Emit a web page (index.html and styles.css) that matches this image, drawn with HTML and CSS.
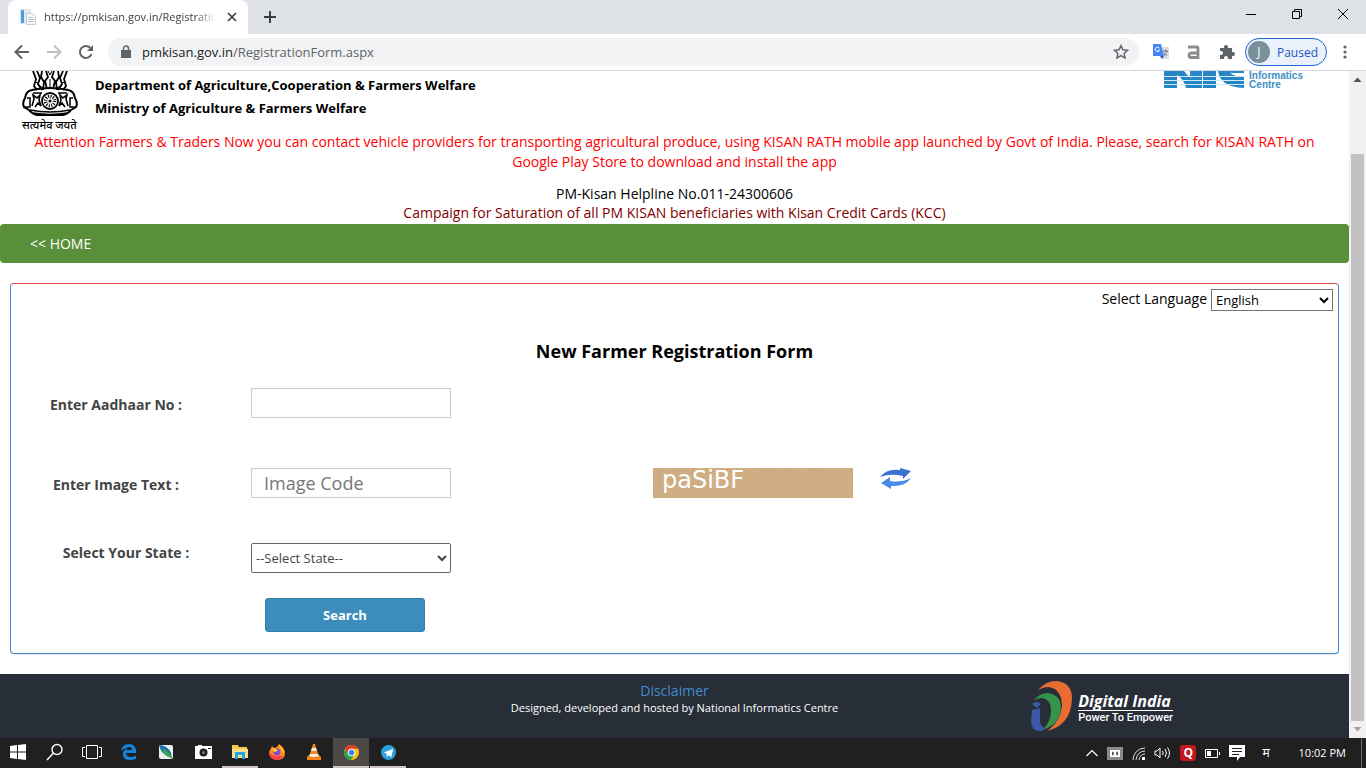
FILE: index.html
```html
<!doctype html>
<html lang="en">
<head>
	<meta charset="UTF-8">
	<title>New Farmer Registration Form</title>
	<link rel="stylesheet" href="styles.css">
</head>
<body>
	<div class="tabs">
		<div class="tab">
			<svg width="16" height="16" viewBox="0 0 16 16"><path fill="#e3e8ee" d="M0 0h11v15H0z"/><path fill="#4a9fd8" d="M1 1h3v13H1z"/><path fill="#f7f9fb" stroke="#c5cdd6" d="M6.500 4.500h6l3 3v8h-9z"/><path stroke="#b5bfcb" d="M8 8.500h5M8 10.500h6M8 12.500h6"/></svg>
			<span class="tab-title">https://pmkisan.gov.in/RegistrationForm.aspx</span>
			<button class="icon" aria-label="Close tab"><svg width="16" height="16" viewBox="0 0 16 16"><path d="M4 4l8 8M12 4l-8 8" stroke="#3c4043" stroke-width="1.700"/></svg></button>
		</div>
		<button class="icon new-tab" aria-label="New tab"><svg width="16" height="16" viewBox="0 0 16 16"><path d="M8 2v12M2 8h12" stroke="#3c4043" stroke-width="2"/></svg></button>
		<div class="win-buttons">
			<button class="icon" aria-label="Minimize"><svg width="12" height="12" viewBox="0 0 12 12"><path d="M1 6.500h10" stroke="#000"/></svg></button>
			<button class="icon" aria-label="Restore"><svg width="12" height="12" viewBox="0 0 12 12"><path d="M1.500 3.500h7v7h-7zM3.500 3V1.500h7v7H9" stroke="#000" fill="none"/></svg></button>
			<button class="icon" aria-label="Close"><svg width="12" height="12" viewBox="0 0 12 12"><path d="M1 1l10 10M11 1L1 11" stroke="#000"/></svg></button>
		</div>
	</div>

	<div class="toolbar">
		<button class="icon" aria-label="Back"><svg width="16" height="16" viewBox="0 0 16 16"><path d="M15 8H2M8 1.500L1.500 8 8 14.500" stroke="#5f6368" stroke-width="2" fill="none"/></svg></button>
		<button class="icon" aria-label="Forward"><svg width="16" height="16" viewBox="0 0 16 16"><path d="M1 8h13M8 1.500L14.500 8 8 14.500" stroke="#bdc1c6" stroke-width="2" fill="none"/></svg></button>
		<button class="icon" aria-label="Reload"><svg width="16" height="16" viewBox="0 0 16 16"><path d="M13.500 10.200A6 6 0 1 1 12.400 4" stroke="#5f6368" stroke-width="2" fill="none"/><path d="M15 1v6H9z" fill="#5f6368"/></svg></button>
		<div class="address">
			<svg width="10" height="14" viewBox="0 0 10 14"><path d="M0 5h10v8H0z" fill="#5f6368"/><path d="M2.500 5V3.500a2.500 2.500 0 0 1 5 0V5" stroke="#5f6368" stroke-width="1.500" fill="none"/></svg>
			<span class="url">pmkisan.gov.in<span class="path">/RegistrationForm.aspx</span></span>
			<svg width="16" height="16" viewBox="0 0 16 16"><path d="M8 1.500l1.900 4.300 4.700.5-3.500 3.100 1 4.600L8 11.600 3.900 14l1-4.600L1.400 6.300l4.700-.5z" stroke="#5f6368" stroke-width="1.400" fill="none"/></svg>
		</div>
		<div class="extensions">
			<svg width="16" height="16" viewBox="0 0 16 16"><path fill="#dadce0" d="M6 3h10v12H9z"/><path fill="#4285f4" d="M0 0h8l3 12H0z"/><path d="M6.300 4.200a2.200 2.200 0 1 0 .2 2H4.700" stroke="#fff" fill="none"/><path fill="#2a56c6" d="M7 12h4l-2 3z"/><path d="M10 7h5M12.500 6v1.500M14 7c0 2-2 4-3 4.500M11 8.500c1 2 2 2.500 3 3" stroke="#6b737b" fill="none"/></svg>
			<svg width="14" height="14" viewBox="0 0 14 14"><path d="M1 2h8.500q1.500 0 1.500 1.500V12.500H4Q2 12.500 2 10.500T4 8h7" stroke="#8a8a8a" stroke-width="2.800" fill="none"/></svg>
			<svg width="16" height="16" viewBox="0 0 16 16"><path fill="#5f6368" d="M1 4h4V3a2 2 0 0 1 4 0v1h4v4h1a2 2 0 0 1 0 4h-1v3H9v-1a2 2 0 0 0-4 0v1H1v-4h1a2 2 0 0 0 0-4H1z"/></svg>
		</div>
		<button class="profile"><span class="avatar">J</span>Paused</button>
		<button class="icon menu" aria-label="Menu"><svg width="4" height="16" viewBox="0 0 4 16"><g fill="#5f6368"><circle cx="2" cy="3" r="1.600"/><circle cx="2" cy="8" r="1.600"/><circle cx="2" cy="13" r="1.600"/></g></svg></button>
	</div>

	<div class="view">
		<div class="page">
			<header class="header">
				<div class="emblem">
					<svg width="56" height="46" viewBox="0 0 56 46">
						<g fill="none" stroke="#000">
							<path d="M11 0l3 8-2 7 3 4M15 0l3 7-2 6 4 6M20 0l-1 6 3 5-1 8M24 0l2 6-3 4 2 8M32 0l-2 6 3 4-2 8M36 0l1 6-3 5 1 8M41 0l-3 7 2 6-4 6M45 0l-3 8 2 7-3 4" stroke-width="1.800"/>
							<path d="M26 0l2 4 2-4M28 8v8M18 15l3 2M38 15l-3 2M13 11l3 1M43 11l-3 1"/>
							<path d="M10 19q-6 1-7 8-3 5-1 9l5 3q3 4 8 5h26q5-1 8-5l5-3q2-4-1-9-1-7-7-8-18-4-36 0z" stroke-width="2"/>
							<path d="M5 27h3v9H3M51 27h-3v9h5M8 39q20 4 40 0M11 42q17 3 34 0" stroke-width="1.500"/>
							<path d="M10 35l2-7-1-4 4 3 3-3-1 5 2 6-3-3-3 4M46 35l-2-7 1-4-4 3-3-3 1 5-2 6 3-3 3 4M11 22h9M36 22h9" stroke-width="1.600"/>
							<circle cx="28" cy="30" r="8" stroke-width="1.800"/>
							<circle cx="28" cy="30" r="4.500" stroke-width="3.500" stroke-dasharray="1 1.350"/>
						</g>
						<circle cx="28" cy="30" r="1.500"/>
					</svg>
					<span class="motto">सत्यमेव जयते</span>
				</div>
				<div class="ministry">
					<div>Department of Agriculture,Cooperation &amp; Farmers Welfare</div>
					<div>Ministry of Agriculture &amp; Farmers Welfare</div>
				</div>
				<div class="nic">
					<svg width="80" height="17" viewBox="0 0 80 17">
						<path fill="#2486c6" d="M0 0h13v17H0zM13 0h7q5 8 18 12v5H22Q20 8 13 4zM26 0h12v14l-12-8zM39 0h13v17H39zM54 0h12q0 5 14 6v11Q56 16 54 0zM66 0h14v2H67z"/>
						<path stroke="#d6e9f6" d="M0 5.500h80M0 9.500h80M0 13.500h80"/>
					</svg>
					<div class="nic-name">Informatics<br>Centre</div>
				</div>
			</header>
			<p class="notice">Attention Farmers &amp; Traders Now you can contact vehicle providers for transporting agricultural produce, using KISAN RATH mobile app launched by Govt of India. Please, search for KISAN RATH on Google Play Store to download and install the app</p>
			<p class="helpline">PM-Kisan Helpline No.011-24300606<br><span class="campaign">Campaign for Saturation of all PM KISAN beneficiaries with Kisan Credit Cards (KCC)</span></p>
			<nav class="nav"><a href="#">&lt;&lt; HOME</a></nav>

			<form class="panel">
				<div class="language">
					<label for="language">Select Language</label>
					<select id="language"><option>English</option></select>
				</div>
				<h1>New Farmer Registration Form</h1>
				<div class="row">
					<label for="aadhaar">Enter Aadhaar No :</label>
					<input type="text" id="aadhaar">
				</div>
				<div class="row">
					<label for="code">Enter Image Text :</label>
					<input type="text" id="code" placeholder="Image Code">
					<div class="captcha">paSiBF</div>
					<button type="button" class="icon refresh" aria-label="New image"><svg width="32" height="22" viewBox="0 0 32 22"><path fill="#3b72d4" d="M0 9Q7 0 20 2V0l11 3-8 8V8Q11 5 0 9z"/><path fill="#4a8ce8" d="M31 10q-6 9-20 8v3L1 15l9-6v4q11 2 21-3z"/></svg></button>
				</div>
				<div class="row row-state">
					<label for="state">Select Your State :</label>
					<select id="state"><option>--Select State--</option></select>
				</div>
				<button type="button" class="search">Search</button>
			</form>

			<footer class="footer">
				<div class="credits">
					<a href="#">Disclaimer</a>
					<div>Designed, developed and hosted by National Informatics Centre</div>
				</div>
				<div class="digital">
					<svg width="44" height="52" viewBox="0 0 44 52">
						<path fill="#e96c32" d="M8 9Q16 0 26 0q16 1 16 18-1 26-25 32 14-10 15-26Q31 7 18 6q-5 0-10 3z"/>
						<path fill="#36934a" d="M4 19q6-7 14-7 13 2 13 15-1 16-18 22 8-9 8-19 0-12-9-13-4 0-8 2z"/>
						<path fill="#3d57a7" d="M2 29l8-2v12q0 6 5 8l-3 3Q1 51 1 40z"/>
						<path fill="#3d57a7" d="M2 23q5-4 9 0l-4 4z"/>
					</svg>
					<div class="digital-text"><strong>Digital India</strong><span>Power To Empower</span></div>
				</div>
			</footer>
		</div>
		<div class="scrollbar">
			<svg width="17" height="17" viewBox="0 0 17 17"><path fill="#505050" d="M4.500 11l4-4.500 4 4.500z"/></svg>
			<div class="thumb"></div>
			<svg width="17" height="17" viewBox="0 0 17 17"><path fill="#a3a3a3" d="M4.500 6l4 4.500 4-4.500z"/></svg>
		</div>
	</div>

	<div class="taskbar">
		<div class="apps">
			<button class="app" aria-label="Start"><svg width="16" height="16" viewBox="0 0 16 16"><path fill="#fff" d="M0 2l7-1v6.500H0zM8 1l8-1v7.500H8zM0 8.500h7V15l-7-1zM8 8.500h8V16l-8-1z"/></svg></button>
			<button class="app" aria-label="Find"><svg width="18" height="18" viewBox="0 0 18 18"><g stroke="#fff" stroke-width="1.400" fill="none"><circle cx="11" cy="6.500" r="5"/><path d="M7.500 10L1 17"/></g></svg></button>
			<button class="app" aria-label="Task view"><svg width="20" height="16" viewBox="0 0 20 16"><path d="M4.500 1.500h11v13h-11zM3 3.500H.5v9H3M17 3.500h2.500v9H17" stroke="#fff" fill="none"/></svg></button>
			<button class="app" aria-label="Edge"><svg width="16" height="16" viewBox="0 0 16 16"><path fill="#1583dc" d="M0 7Q1 0 8 0q7 0 7.500 9H5q0 4 5 4 3 0 5-1.500V15q-3 1-6 1-7 0-7-6 0-4 4-6-3 0-6 3zm5-1h6q0-3-3-3-2.500 0-3 3z"/></svg></button>
			<button class="app" aria-label="Notes"><svg width="16" height="16" viewBox="0 0 16 16"><rect x="1" y="1" width="14" height="14" rx="2" fill="#e9eef0"/><path fill="#1b6fa8" d="M1 1q8 0 12 8l1 5Q3 11 1 1z"/><path fill="#45a648" d="M4 4q7 3 10 10-8-1-10-10z"/></svg></button>
			<button class="app" aria-label="Camera"><svg width="17" height="14" viewBox="0 0 17 14"><path fill="#fff" d="M0 1h3V0h4v1h10v13H0z"/><circle cx="8.500" cy="7.500" r="4" fill="#202020"/><circle cx="8.500" cy="7.500" r="1.500" fill="#777"/><path stroke="#202020" d="M13 3.500h3"/></svg></button>
			<button class="app open" aria-label="Files"><svg width="16" height="14" viewBox="0 0 16 14"><path fill="#f3c84b" d="M0 0h6l1 2h8v4H0z"/><path fill="#fbdf88" d="M0 4h16v9H0z"/><path fill="#25a6e0" d="M3 7h10v7h-3v-4H6v4H3z"/></svg></button>
			<button class="app" aria-label="Firefox"><svg width="16" height="16" viewBox="0 0 16 16"><path fill="#ff8a1c" d="M3 2l2 2 3-1 2-3q6 4 6 9 0 7-8 7-8-1-8-8z"/><path fill="#fb3b50" d="M0 7q2 6 9 5l5 0q-2 4-7 4-7-1-7-9z"/><circle cx="8" cy="8" r="3.500" fill="#8548d8"/><path fill="#ffcf35" d="M10 1q5 4 5 8l-3-3zM3 4l4 1 2 2-4 1z"/></svg></button>
			<button class="app" aria-label="VLC"><svg width="14" height="16" viewBox="0 0 14 16"><path fill="#f58410" d="M6 0h2l4 13H2zM0 13l2-2h10l2 2v3H0z"/><path fill="#eee" d="M5 4h4l1 3H4zM3 10h8l1 2q-5 2-10 0z"/></svg></button>
			<button class="app open active" aria-label="Chrome"><svg width="15" height="15" viewBox="0 0 16 16"><circle cx="8" cy="8" r="8" fill="#fbc116"/><path fill="#e33b2e" d="M1 4a8 8 0 0 1 14 0H8L4.500 10z"/><path fill="#2ba24c" d="M1 4a8 8 0 0 0 6.500 12L11 10H4.500z"/><circle cx="8" cy="8" r="4" fill="#fff"/><circle cx="8" cy="8" r="3" fill="#3f7ee8"/></svg></button>
			<button class="app open" aria-label="Telegram"><svg width="15" height="15" viewBox="0 0 16 16"><circle cx="8" cy="8" r="8" fill="#2ba0da"/><path fill="#fff" d="M3 8l10-4-2 9-3-2-2 2V9z"/></svg></button>
		</div>
		<div class="tray">
			<svg width="12" height="8" viewBox="0 0 12 8"><path d="M.5 7L6 1.500 11.500 7" stroke="#fff" stroke-width="1.200" fill="none"/></svg>
			<svg width="16" height="13" viewBox="0 0 16 13"><path fill="#8a8a8a" d="M0 0h16v13H0z"/><path fill="#fff" d="M3 3h10v7H3z"/><path d="M5 4.500q2 0 2 2t-2 2zM11 4.500q-2 0-2 2t2 2z" fill="#555"/></svg>
			<svg width="13" height="13" viewBox="0 0 13 13"><g stroke="#ddd" fill="none"><path d="M1 13A12 12 0 0 1 13 1M4 13a9 9 0 0 1 9-9M7 13a6 6 0 0 1 6-6"/></g><path fill="#fff" d="M10 10h3v3h-3z"/></svg>
			<svg width="17" height="14" viewBox="0 0 17 14"><path d="M1 5h2l3-3v10L3 9H1zM8.500 5q1.500 2 0 4M11 3q3 4 0 8M13.500 1.500q4 5.500 0 11" stroke="#fff" fill="none"/></svg>
			<span class="quick">Q</span>
			<svg width="15" height="9" viewBox="0 0 15 9"><path d="M.5.5h12v8H.5zM14.500 3v3" stroke="#fff" fill="none"/><path fill="#fff" d="M2 2h4v5H2z"/></svg>
			<svg width="16" height="16" viewBox="0 0 16 16"><path fill="#fff" d="M0 0h16v12h-5l-3 4v-4H0z"/><path stroke="#202020" d="M3 3.500h10M3 6.500h10M3 9.500h7"/></svg>
			<span class="lang">म</span>
			<span class="clock">10:02 PM</span>
		</div>
	</div>
</body>
</html>
```
FILE: styles.css
```css
*{
	box-sizing:border-box;
}

body{
	margin:0;
	height:100vh;
	display:flex;
	flex-direction:column;
	overflow:hidden;
	font:14px/20px "Open Sans", "Noto Sans", sans-serif;
	color:#000;
	background:#fff;
}

svg{
	display:block;
	flex:none;
}

a{
	text-decoration:none;
}

button, input, select{
	font-family:inherit;
}

.icon{
	display:flex;
	padding:0;
	border:0;
	background:none;
}

/* browser window */
.tabs{
	flex:none;
	display:flex;
	align-items:center;
	height:34px;
	padding-left:8px;
	background:#dee1e6;
}

.tab{
	display:flex;
	align-items:center;
	gap:8px;
	width:240px;
	height:34px;
	padding:0 8px 0 12px;
	border-radius:8px 8px 0 0;
	background:#fff;
}

.tab-title{
	flex:1;
	overflow:hidden;
	white-space:nowrap;
	font-size:11px;
	color:#3c4043;
	-webkit-mask-image:linear-gradient(to right, #000 88%, transparent);
	mask-image:linear-gradient(to right, #000 88%, transparent);
}

.new-tab{
	margin-left:14px;
}

.win-buttons{
	display:flex;
	gap:34px;
	margin-left:auto;
	padding:0 17px 6px 0;
}

.toolbar{
	flex:none;
	display:flex;
	align-items:center;
	gap:16px;
	height:37px;
	padding:0 19px 0 14px;
	border-bottom:1px solid #d5d7da;
}

.address{
	flex:1;
	display:flex;
	align-items:center;
	gap:11px;
	height:28px;
	margin-left:-2px;
	padding:0 10px 0 13px;
	border-radius:14px;
	background:#f1f3f4;
}

.url{
	flex:1;
	font-size:13px;
	color:#202124;
}

.path{
	color:#5f6368;
}

.extensions{
	display:flex;
	align-items:center;
	gap:18px;
	margin-left:-2px;
}

.profile{
	display:flex;
	align-items:center;
	gap:7px;
	height:28px;
	margin-left:-6px;
	padding:0 8px 0 2px;
	border:1px solid #1a66d2;
	border-radius:14px;
	background:#eaf1fb;
	font-size:12px;
	color:#1a56c4;
}

.avatar{
	width:22px;
	height:22px;
	border-radius:50%;
	background:#78909c;
	line-height:22px;
	color:#fff;
}

/* page */
.view{
	flex:1;
	min-height:0;
	display:flex;
}

.page{
	flex:1;
	min-width:0;
	display:flex;
	flex-direction:column;
	overflow:hidden;
}

.header{
	display:flex;
	align-items:flex-start;
	padding:0 46px 0 22px;
}

.emblem{
	width:56px;
	height:61px;
}

.motto{
	display:block;
	font:500 11px/16px "Noto Sans", "Noto Sans Devanagari", sans-serif;
	white-space:nowrap;
}

.ministry{
	margin:3px auto 0 17px;
	font-size:13px;
	font-weight:bold;
	line-height:23px;
}

.nic{
	display:flex;
	gap:5px;
}

.nic-name{
	font:bold 10px/9px "Liberation Sans", sans-serif;
	color:#3e8fc6;
}

.notice{
	margin:0;
	padding:0 30px;
	text-align:center;
	color:#f00;
}

.helpline{
	margin:12px 0 2px;
	line-height:19px;
	text-align:center;
}

.campaign{
	color:#800000;
}

.nav{
	padding:10px 30px 9px;
	border-radius:4px;
	background:#588f38;
}

.nav a{
	color:#fff;
}

.panel{
	margin:20px 10px;
	padding-bottom:21px;
	border:1px solid #428bca;
	border-top-color:#dd4b39;
	border-radius:4px;
	box-shadow:0 1px 1px rgba(0,0,0,0.1);
}

.language{
	display:flex;
	justify-content:flex-end;
	gap:4px;
	padding:5px 5px 0;
}

.language select{
	width:122px;
	height:22px;
	border:1px solid #767676;
	border-radius:0;
	background:#fff;
	font-size:13px;
}

h1{
	margin:28px 0 24px;
	font-size:18px;
	line-height:25px;
	text-align:center;
}

.row{
	display:flex;
	margin-bottom:50px;
	color:#444;
}

.row label{
	width:240px;
	padding:7px 30px 0 0;
	font-weight:bold;
	line-height:20px;
	text-align:center;
}

.row input, .row select{
	width:200px;
	height:30px;
	padding:0 12px;
	border:1px solid #ccc;
	background:#fff;
	font-size:18px;
	color:#444;
}

.row input::placeholder{
	color:#777;
}

.row select{
	padding:0;
	border-color:#666;
	border-radius:2px;
	font-size:13px;
}

.row-state{
	margin:-5px 0 25px;
}

.row-state label{
	padding:0 10px 0 0;
}

.captcha{
	width:200px;
	height:30px;
	margin-left:202px;
	padding-left:9px;
	background:repeating-linear-gradient(60deg, #d2b087 0 1px, #cfac80 1px 3px);
	font:24px/24px "DejaVu Sans", sans-serif;
	color:#fff;
}

.refresh{
	height:22px;
	margin-left:27px;
}

.search{
	display:block;
	width:160px;
	height:34px;
	margin-left:254px;
	border:1px solid #367fa9;
	border-radius:3px;
	background:#3c8dbc;
	font-size:13px;
	font-weight:bold;
	color:#fff;
}

.footer{
	flex:1;
	display:grid;
	grid-template-columns:1fr auto 1fr;
	padding-top:7px;
	background:#272e38;
}

.credits{
	grid-column:2;
	font-size:11px;
	line-height:14px;
	text-align:center;
	color:#fff;
}

.credits a{
	font-size:14px;
	line-height:20px;
	color:#428bca;
}

.digital{
	display:flex;
	gap:4px;
	margin-left:192px;
	color:#fff;
}

.digital-text{
	display:flex;
	flex-direction:column;
	align-self:flex-start;
	padding-top:11px;
	font:500 11px/13px Roboto, sans-serif;
}

.digital-text strong{
	border-bottom:1px solid #fff;
	font:italic bold 16px/18px "Open Sans", sans-serif;
}

.scrollbar{
	flex:none;
	display:flex;
	flex-direction:column;
	width:17px;
	background:#f1f1f1;
}

.thumb{
	flex:1;
	margin:66px 2px 0;
	background:#c1c1c1;
}

/* taskbar */
.taskbar{
	flex:none;
	display:flex;
	justify-content:space-between;
	height:30px;
	background:#202020;
	color:#fff;
}

.apps{
	display:flex;
	gap:1px;
}

.app{
	display:flex;
	align-items:center;
	justify-content:center;
	width:36px;
	padding:0;
	border:0;
	border-bottom:2px solid transparent;
	background:none;
}

.open{
	border-bottom-color:#cfc4c4;
}

.active{
	background:#4c4947;
}

.tray{
	display:flex;
	align-items:center;
	gap:9px;
	padding-right:4px;
	font-size:12px;
}

/* show desktop edge */
.tray::after{
	content:"";
	align-self:stretch;
	width:1px;
	margin-left:6px;
	background:#6b6b6b;
}

.quick{
	width:16px;
	border-radius:3px;
	background:#c4161c;
	font-weight:bold;
	line-height:16px;
	text-align:center;
}

.lang{
	margin:0 20px 0 8px;
	font-family:"Noto Sans", "Noto Sans Devanagari", sans-serif;
}

.clock{
	font-size:11px;
}
```
